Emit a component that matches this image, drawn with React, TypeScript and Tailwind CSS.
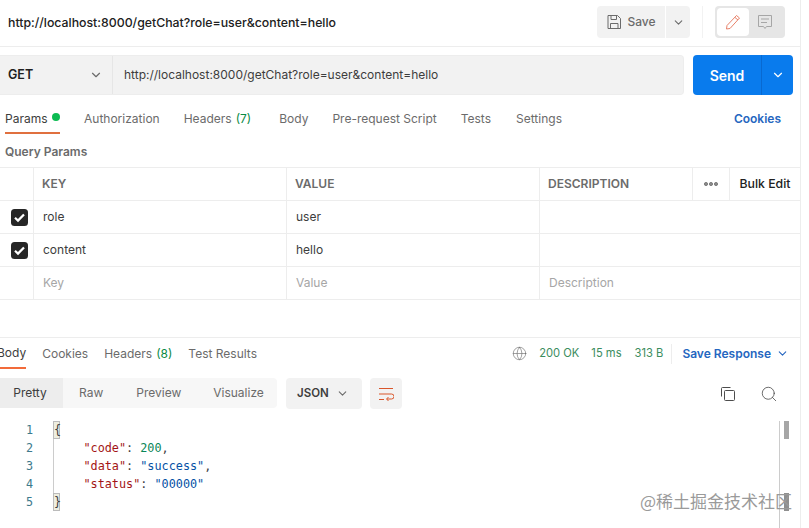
import { ChevronDown, Globe, Search } from "lucide-react";

const url = "http://localhost:8000/getChat?role=user&content=hello";

const requestTabs = [
  { label: "Authorization", margin: "ml-6" },
  { label: "Headers", count: "(7)", margin: "ml-6" },
  { label: "Body", margin: "ml-[28px]" },
  { label: "Pre-request Script", margin: "ml-6" },
  { label: "Tests", margin: "ml-6" },
  { label: "Settings", margin: "ml-[25px]" },
];

const params = [
  { key: "role", value: "user" },
  { key: "content", value: "hello" },
];

const cols = "grid grid-cols-[34px_253px_253px_153px_37px_70px]";
const headCell = "flex items-center border-r border-[#ededed] px-2";
const cell = "flex items-center border-r border-[#ededed] px-[9px]";

const Check = () => (
  <svg width="17" height="17" viewBox="0 0 17 17" className="shrink-0">
    <rect width="17" height="17" rx="3.500" fill="#262626" />
    <path d="M4 8.800 7 11.600 13 5.400" fill="none" stroke="#fff" strokeWidth="2.200" />
  </svg>
);

const Floppy = () => (
  <svg width="16" height="16" viewBox="0 0 16 16" fill="none" stroke="#6b6b6b" strokeWidth="1">
    <path d="M2 1.500h9.500l3 3v10h-12.500z" />
    <path d="M5 1.500v4h5.500v-4M4.500 14.500v-5h7.500v5" />
  </svg>
);

const Pencil = () => (
  <svg width="16" height="16" viewBox="0 0 16 16" fill="none" stroke="#e8826a" strokeWidth="1">
    <path d="M11.500 1.500 14.500 4 5 14.500 1.500 15 2 11.500z" />
    <path d="M10 3.500 13 6" />
  </svg>
);

const Comment = () => (
  <svg width="16" height="16" viewBox="0 0 16 16" fill="none" stroke="#a6a6a6" strokeWidth="1">
    <path d="M1.500 1.500h13v11h-5l-1.500 2-1.500-2h-5z" />
    <path d="M4 5h8M4 8.500h6" />
  </svg>
);

const WrapLines = () => (
  <svg width="16" height="16" viewBox="0 0 16 16" fill="none" stroke="#d9562b" strokeWidth="1">
    <path d="M1 2.500h14M1 8h12.500a2.300 2.300 0 0 1 0 5H9" />
    <path d="M1 13.500h5M10.500 11 8.500 13l2 2" />
  </svg>
);

const CopyIcon = () => (
  <svg width="16" height="16" viewBox="0 0 16 16" fill="none" stroke="#4d4d4d" strokeWidth="1">
    <rect x="4.500" y="4.500" width="10" height="10" rx="1" />
    <path d="M1.500 10.500v-8a1 1 0 0 1 1-1h8" />
  </svg>
);

const Dots = () => (
  <svg width="14" height="6" viewBox="0 0 14 6" fill="#8c8c8c" stroke="#6b6b6b" strokeWidth="0.800">
    <circle cx="2" cy="3" r="1.600" />
    <circle cx="7" cy="3" r="1.600" />
    <circle cx="12" cy="3" r="1.600" />
  </svg>
);

export default function App() {
  return (
    <div className="relative h-[528px] w-[809px] overflow-hidden bg-white font-['Inter',sans-serif] text-[12px] text-[#6b6b6b]">
      <div className="h-[528px] w-[801px] border-r border-[#ededed]">
        {/* Title bar */}
        <div className="flex h-[47px] items-center border-b border-[#ededed] pl-2 pr-[15px]">
          <span className="flex-1 text-[12.3px] font-medium text-[#212121]">{url}</span>
          <div className="mb-[2px] flex items-center">
            <div className="flex h-8 items-center gap-px">
              <button className="flex h-8 w-[68px] items-center justify-center gap-[5px] rounded-l bg-[#f2f2f2] font-medium">
                <Floppy />
                Save
              </button>
              <button className="flex h-8 w-6 items-center justify-center rounded-r bg-[#f2f2f2]">
                <ChevronDown size={13} />
              </button>
            </div>
            <div className="mx-[12px] h-8 w-px bg-[#f2f2f2]" />
            <div className="flex h-8 w-[70px] items-center rounded bg-[#e6e6e6] p-0.5">
              <div className="flex h-7 w-8 items-center justify-center rounded-sm bg-white">
                <Pencil />
              </div>
              <div className="flex h-7 w-8 items-center justify-center">
                <Comment />
              </div>
            </div>
          </div>
        </div>

        {/* Request bar */}
        <div className="mt-2 flex h-10 pr-[7px]">
          <div className="flex flex-1 items-center rounded-r border border-l-0 border-[#ededed] bg-[#f2f2f2]">
            <div className="flex h-full w-[113px] items-center justify-between border-r border-[#e6e6e6] pl-2 pr-[9px] text-[12.500px] font-semibold text-[#212121]">
              GET
              <ChevronDown size={14} className="text-[#6b6b6b]" />
            </div>
            <span className="pl-[11px] text-[#3d3d3d]">{url}</span>
          </div>
          <div className="ml-[9px] flex w-[100px] rounded bg-[#097bed] text-white">
            <div className="flex w-[68px] items-center justify-center text-[14px] font-semibold">Send</div>
            <div className="flex flex-1 items-center justify-center border-l border-[#0869d1]">
              <ChevronDown size={14} />
            </div>
          </div>
        </div>

        {/* Request tabs */}
        <div className="flex h-[39px] items-end pl-[5px] pr-[19px]">
          <div className="flex h-[28px] w-[55px] items-start justify-between border-b-2 border-[#e0703f] pt-1 text-[#3d3d3d]">
            Params
            <span className="mt-[3px] size-2 rounded-full bg-[#0cbb52]" />
          </div>
          {requestTabs.map((tab) => (
            <div key={tab.label} className={`${tab.margin} h-[28px] pt-1`}>
              {tab.label}
              {tab.count && <span className="ml-1 text-[#0a8a45]">{tab.count}</span>}
            </div>
          ))}
          <span className="ml-auto h-[28px] pt-1 font-semibold text-[#2566c0]">Cookies</span>
        </div>

        <div className="flex h-[33px] items-center pl-[5px] pt-[3px] font-semibold">Query Params</div>

        {/* Params table */}
        <div className="border-t border-[#ededed]">
          <div className={`${cols} h-[33px] border-b border-[#ededed] font-semibold`}>
            <div className={headCell} />
            <div className={headCell}>KEY</div>
            <div className={headCell}>VALUE</div>
            <div className={headCell}>DESCRIPTION</div>
            <div className="flex items-center justify-center border-r border-[#ededed]">
              <Dots />
            </div>
            <div className="flex items-center justify-center text-[12.300px] font-medium text-[#212121]">Bulk Edit</div>
          </div>
          {params.map((p) => (
            <div key={p.key} className={`${cols} h-[33px] border-b border-[#ededed] text-[#3d3d3d]`}>
              <div className="flex items-center border-r border-[#ededed] pl-[11px]">
                <Check />
              </div>
              <div className={cell}>{p.key}</div>
              <div className={cell}>{p.value}</div>
              <div className="col-span-3" />
            </div>
          ))}
          <div className={`${cols} h-[33px] border-b border-[#ededed] text-[#a6a6a6]`}>
            <div className={headCell} />
            <div className={cell}>Key</div>
            <div className={cell}>Value</div>
            <div className="col-span-3 flex items-center px-[9px]">Description</div>
          </div>
        </div>

        {/* Response */}
        <div className="mt-[37px] border-t border-[#ededed]">
          <div className="flex h-[31px] items-stretch pr-[11px]">
            <div className="-ml-[3px] flex items-center border-b-2 border-[#f26b3a] text-[#3d3d3d]">Body</div>
            <div className="ml-4 flex items-center">Cookies</div>
            <div className="ml-4 flex items-center">
              Headers
              <span className="ml-1 text-[#0a8a45]">(8)</span>
            </div>
            <div className="ml-4 flex items-center">Test Results</div>
            <div className="ml-auto flex items-center text-[11.200px] text-[#3b8d5e]">
              <Globe size={15} strokeWidth={1} className="mr-3 text-[#6b6b6b]" />
              <span>200 OK</span>
              <span className="ml-3">15 ms</span>
              <span className="ml-[13px]">313 B</span>
              <div className="ml-2 mr-[10px] h-5 w-px bg-[#ededed]" />
              <span className="text-[12px] font-semibold text-[#2566c0]">Save Response</span>
              <ChevronDown size={13} className="ml-[5px] text-[#2566c0]" />
            </div>
          </div>

          <div className="mt-[9px] flex h-[31px] items-start">
            <div className="flex h-[30px] w-[277px] items-center rounded-r bg-[#f7f7f7]">
              <div className="flex h-full w-[63px] items-center justify-center bg-[#ededed] pr-[3px] text-[#3d3d3d]">Pretty</div>
              <div className="ml-4">Raw</div>
              <div className="ml-[33px]">Preview</div>
              <div className="ml-[32px]">Visualize</div>
            </div>
            <div className="ml-[9px] flex h-[31px] w-[76px] items-center justify-between rounded bg-[#f2f2f2] pl-[11px] pr-[13px] text-[11.500px] font-semibold text-[#3d3d3d]">
              JSON
              <ChevronDown size={13} className="text-[#6b6b6b]" />
            </div>
            <div className="ml-2 flex h-[31px] w-8 items-center justify-center rounded bg-[#f2f2f2]">
              <WrapLines />
            </div>
            <div className="ml-auto flex items-center gap-[24px] pr-[22px] pt-[7px] text-[#3d3d3d]">
              <CopyIcon />
              <Search size={18} strokeWidth={1} />
            </div>
          </div>

          {/* Code viewer */}
          <div className="mt-3 flex h-[108px] font-['DejaVu_Sans_Mono',monospace] text-[11.800px] leading-[18px]">
            <div className="w-[33px] text-right text-[#3d7a8c]">
              <div>1</div>
              <div>2</div>
              <div>3</div>
              <div>4</div>
              <div>5</div>
            </div>
            <div className="ml-[20px] flex-1 text-[#3d3d3d]">
              <div className="h-[90px] w-fit border-l border-[#cccccc]">
                <div className="-ml-px w-[7px] border border-[#bbbbbb] bg-[#eeeee0] leading-[16px]">{"{"}</div>
                <div className="whitespace-pre pl-px">
                  {"    "}
                  <span className="text-[#a31515]">"code"</span>: <span className="text-[#098658]">200</span>,
                </div>
                <div className="whitespace-pre pl-px">
                  {"    "}
                  <span className="text-[#a31515]">"data"</span>: <span className="text-[#0451a5]">"success"</span>,
                </div>
                <div className="whitespace-pre pl-px">
                  {"    "}
                  <span className="text-[#a31515]">"status"</span>: <span className="text-[#0451a5]">"00000"</span>
                </div>
                <div className="-ml-px w-[7px] border border-[#bbbbbb] bg-[#eeeee0] leading-[16px]">{"}"}</div>
              </div>
            </div>
            <div className="mr-[11px] h-[108px] w-[10px] border-l border-[#cccccc] pl-1">
              <div className="h-[18px] w-[5px] bg-[#a6a6a6]" />
              <div className="mt-[54px] h-[18px] w-[5px] bg-[#8f8f8f]" />
            </div>
          </div>
        </div>
      </div>

      {/* Watermark */}
      <div className="absolute left-[640px] top-[490px] font-['Noto_Sans_CJK_SC',sans-serif] text-[17px] leading-[22px] text-[#9a9a9a]">
        @稀土掘金技术社区
      </div>
    </div>
  );
}
